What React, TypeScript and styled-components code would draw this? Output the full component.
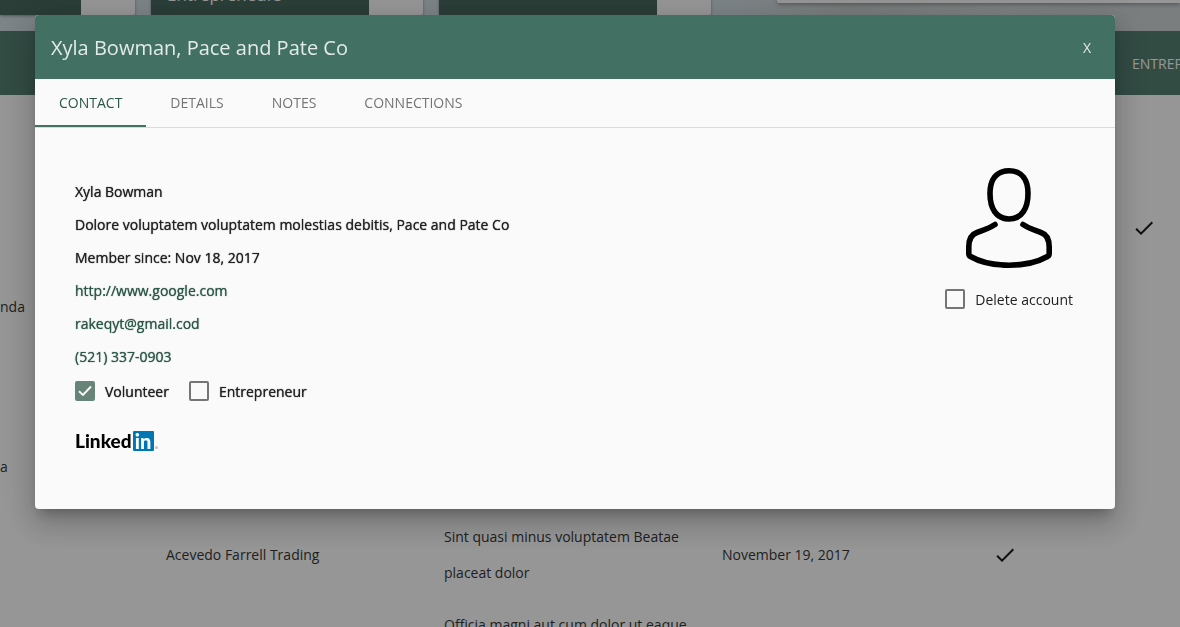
import React, { useState } from "react";
import styled, { createGlobalStyle } from "styled-components";

const green = "#427163";
const sans = '"Open Sans", "Noto Sans", sans-serif';

const GlobalStyle = createGlobalStyle`
  * { box-sizing: border-box; }
  body {
    margin: 0;
    background: #fafafa;
    font-family: ${sans};
    font-size: 14px;
    color: #212121;
    overflow: hidden;
  }
`;

const Page = styled.div`
  height: 100vh;
  overflow: hidden;
`;

const Hero = styled.header`
  display: flex;
  align-items: flex-end;
  gap: 16px;
  height: 31px;
  padding-bottom: 16px;
  overflow: hidden;
  background: linear-gradient(90deg, #cbd8de 0%, #cbd8de 62%, #c2c9c8 72%, #cbd2d3 85%, #c6cdd0 100%);
`;

const Card = styled.section<{ $first?: boolean }>`
  display: flex;
  flex: none;
  width: ${(p) => (p.$first ? "135px" : "272px")};
  height: 64px;
  background: #fafafa;
  border-radius: 2px;
  box-shadow: 0 1px 3px rgba(0, 0, 0, 0.4);
`;

const CardTitle = styled.h2`
  flex: 1;
  margin: 0 54px 0 0;
  padding: 32px 16px 0;
  font-size: 17px;
  font-weight: 400;
  line-height: 24px;
  color: #fafafa;
  background: #35574c;
`;

const SearchPanel = styled.section`
  flex: 1;
  align-self: flex-start;
  height: 3px;
  margin-left: 50px;
  background: #fafafa;
  border-radius: 0 0 0 2px;
  box-shadow: 0 1px 4px rgba(0, 0, 0, 0.5);
`;

const MembersTable = styled.table`
  width: 1263px;
  table-layout: fixed;
  border-collapse: collapse;
  line-height: 36px;
  font-size: 14px;
`;

const HeadCell = styled.th<{ $width: number }>`
  width: ${(p) => p.$width}px;
  height: 64px;
  padding: 2px 0 0;
  background: ${green};
  color: #fafafa;
  font-weight: 400;
  text-align: left;
  text-transform: uppercase;
`;

const Row = styled.tr<{ $height: number }>`
  height: ${(p) => p.$height}px;
`;

const Cell = styled.td<{ $flush?: boolean }>`
  padding: 8px ${(p) => (p.$flush ? "0" : "8px")};
  vertical-align: middle;

  svg {
    display: block;
  }
`;

const Overlay = styled.div`
  position: fixed;
  inset: 0;
  padding: 15px 65px 0 35px;
  background: rgba(33, 33, 33, 0.46);
`;

const Dialog = styled.div`
  overflow: hidden;
  border-radius: 4px;
  background: #fafafa;
  box-shadow: 0 8px 10px -5px rgba(0, 0, 0, 0.2), 0 16px 24px 2px rgba(0, 0, 0, 0.14),
    0 6px 30px 5px rgba(0, 0, 0, 0.12);
`;

const DialogBar = styled.div`
  display: flex;
  align-items: center;
  justify-content: space-between;
  height: 64px;
  padding: 0 16px;
  background: ${green};
  color: #e3eae8;
`;

const DialogTitle = styled.h1`
  margin: 0;
  font-size: 20px;
  font-weight: 400;
`;

const CloseButton = styled.button`
  width: 24px;
  height: 36px;
  padding: 0;
  border: 0;
  background: none;
  color: inherit;
  font: 400 14px ${sans};
`;

const Tabs = styled.div`
  display: flex;
  height: 49px;
  border-bottom: 1px solid #d8dbda;
`;

const Tab = styled.button<{ $active: boolean }>`
  height: 48px;
  padding: 0 24px;
  border: 0;
  border-bottom: 2px solid ${(p) => (p.$active ? green : "transparent")};
  background: none;
  color: ${(p) => (p.$active ? "#2c5748" : "#757575")};
  font: 400 14px ${sans};
  text-transform: uppercase;
`;

const Panel = styled.div`
  display: flex;
  justify-content: space-between;
  padding: 40px 42px 58px 40px;
`;

const Details = styled.div`
  display: flex;
  flex-direction: column;
  align-items: flex-start;
  padding-top: 7px;
  text-shadow: 0 0 1px currentColor;
`;

const Line = styled.p`
  margin: 0;
  line-height: 33px;
`;

const ContactLink = styled.a`
  color: #2c5748;
  line-height: 33px;
  text-decoration: none;
`;

const Roles = styled.div`
  display: flex;
  gap: 20px;
  height: 36px;
  margin-bottom: 22px;
`;

const CheckLabel = styled.label`
  display: flex;
  align-items: center;
  gap: 10px;
`;

const Box = styled.span`
  position: relative;
  display: flex;
  width: 20px;
  height: 20px;

  svg {
    position: absolute;
    inset: 0;
    pointer-events: none;
  }
`;

const BoxInput = styled.input`
  appearance: none;
  width: 20px;
  height: 20px;
  margin: 0;
  border: 2px solid #757575;
  border-radius: 2px;

  &:checked {
    border-color: #688479;
    background: #688479;
  }
`;

const LogoLink = styled.a`
  display: flex;
  align-items: center;
  gap: 1px;
  height: 20px;
  color: #000;
  font: 900 19px/20px Lato, sans-serif;
  text-decoration: none;
  text-shadow: none;
`;

const LogoBox = styled.span`
  width: 21px;
  height: 20px;
  border-radius: 1px;
  background: #0077b5;
  color: #fff;
  font-size: 20px;
  text-align: center;
`;

const LogoDot = styled.span`
  align-self: flex-end;
  width: 3px;
  height: 3px;
  margin-bottom: 2px;
  border-radius: 50%;
  background: #c4c4c4;
`;

const Account = styled.aside`
  display: flex;
  flex-direction: column;
  align-items: center;
  gap: 13px;
`;

const DeleteRow = styled.div`
  display: flex;
  height: 36px;
`;

function Tick() {
  return (
    <svg width="24" height="24" viewBox="0 0 24 24" aria-hidden="true">
      <path fill="#000" d="M9 16.2 4.8 12l-1.4 1.4L9 19 21 7l-1.4-1.4z" />
    </svg>
  );
}

function Person() {
  return (
    <svg width="86" height="100" viewBox="0 0 86 100" fill="none" stroke="#000" strokeWidth="5.6" strokeLinecap="round" aria-hidden="true">
      <path d="M43 2.8C30 2.8 24 12 24 25.5C24 40 30 51 43 51S62 40 62 25.5C62 12 56 2.8 43 2.8Z" />
      <path d="M29 56.5C23 60.5 17 62.5 11 64.5C5 66.5 2.8 72 2.8 79V85.5Q2.8 87.5 4.5 88.5C15 94.5 28 97.2 43 97.2S71 94.5 81.5 88.5Q83.2 87.5 83.2 85.5V79C83.2 72 81 66.5 75 64.5C69 62.5 63 60.5 57 56.5" />
    </svg>
  );
}

function Checkbox({ label, initial = false }: { label: string; initial?: boolean }) {
  const [checked, setChecked] = useState(initial);
  return (
    <CheckLabel>
      <Box>
        <BoxInput type="checkbox" checked={checked} onChange={() => setChecked(!checked)} />
        {checked && (
          <svg width="20" height="20" viewBox="0 0 20 20" aria-hidden="true">
            <path d="M4 10.2 8 14 16 5.5" fill="none" stroke="#fafafa" strokeWidth="1.9" />
          </svg>
        )}
      </Box>
      {label}
    </CheckLabel>
  );
}

const tabs = ["Contact", "Details", "Notes", "Connections"];

const columns = [
  { title: "", width: 158 },
  { title: "", width: 278 },
  { title: "", width: 278 },
  { title: "", width: 279 },
  { title: "", width: 139 },
  { title: "Entrepreneur", width: 131 },
];

type Member = {
  height: number;
  name?: string;
  company?: string;
  about?: string;
  joined?: string;
  volunteer?: boolean;
  entrepreneur?: boolean;
};

const members: Member[] = [
  { height: 98 },
  { height: 70, entrepreneur: true },
  { height: 88, name: "nda" },
  { height: 72 },
  { height: 88, name: "a" },
  {
    height: 88,
    company: "Acevedo Farrell Trading",
    about: "Sint quasi minus voluptatem Beatae placeat dolor",
    joined: "November 19, 2017",
    volunteer: true,
  },
  { height: 52, about: "Officia magni aut cum dolor ut eaque" },
];

export default function App() {
  const [active, setActive] = useState("Contact");
  return (
    <>
      <GlobalStyle />
      <Page>
        <Hero>
          <Card $first>
            <CardTitle />
          </Card>
          <Card>
            <CardTitle>Entrepreneurs</CardTitle>
          </Card>
          <Card>
            <CardTitle />
          </Card>
          <SearchPanel />
        </Hero>
        <MembersTable>
          <thead>
            <tr>
              {columns.map((c, i) => (
                <HeadCell key={i} $width={c.width}>
                  {c.title}
                </HeadCell>
              ))}
            </tr>
          </thead>
          <tbody>
            {members.map((m, i) => (
              <Row key={i} $height={m.height}>
                <Cell $flush>{m.name}</Cell>
                <Cell>{m.company}</Cell>
                <Cell>{m.about}</Cell>
                <Cell>{m.joined}</Cell>
                <Cell $flush>{m.volunteer && <Tick />}</Cell>
                <Cell $flush>{m.entrepreneur && <Tick />}</Cell>
              </Row>
            ))}
          </tbody>
        </MembersTable>
      </Page>
      <Overlay>
        <Dialog role="dialog" aria-labelledby="dialog-title">
          <DialogBar>
            <DialogTitle id="dialog-title">Xyla Bowman, Pace and Pate Co</DialogTitle>
            <CloseButton type="button">X</CloseButton>
          </DialogBar>
          <Tabs role="tablist">
            {tabs.map((t) => (
              <Tab key={t} type="button" role="tab" aria-selected={t === active} $active={t === active} onClick={() => setActive(t)}>
                {t}
              </Tab>
            ))}
          </Tabs>
          <Panel>
            <Details>
              <Line>Xyla Bowman</Line>
              <Line>Dolore voluptatem voluptatem molestias debitis, Pace and Pate Co</Line>
              <Line>Member since: Nov 18, 2017</Line>
              <ContactLink href="http://www.google.com">http://www.google.com</ContactLink>
              <ContactLink href="mailto:rakeqyt@gmail.cod">rakeqyt@gmail.cod</ContactLink>
              <ContactLink href="tel:5213370903">(521) 337-0903</ContactLink>
              <Roles>
                <Checkbox label="Volunteer" initial />
                <Checkbox label="Entrepreneur" />
              </Roles>
              <LogoLink href="https://www.linkedin.com">
                Linked
                <LogoBox>in</LogoBox>
                <LogoDot />
              </LogoLink>
            </Details>
            <Account>
              <Person />
              <DeleteRow>
                <Checkbox label="Delete account" />
              </DeleteRow>
            </Account>
          </Panel>
        </Dialog>
      </Overlay>
    </>
  );
}
